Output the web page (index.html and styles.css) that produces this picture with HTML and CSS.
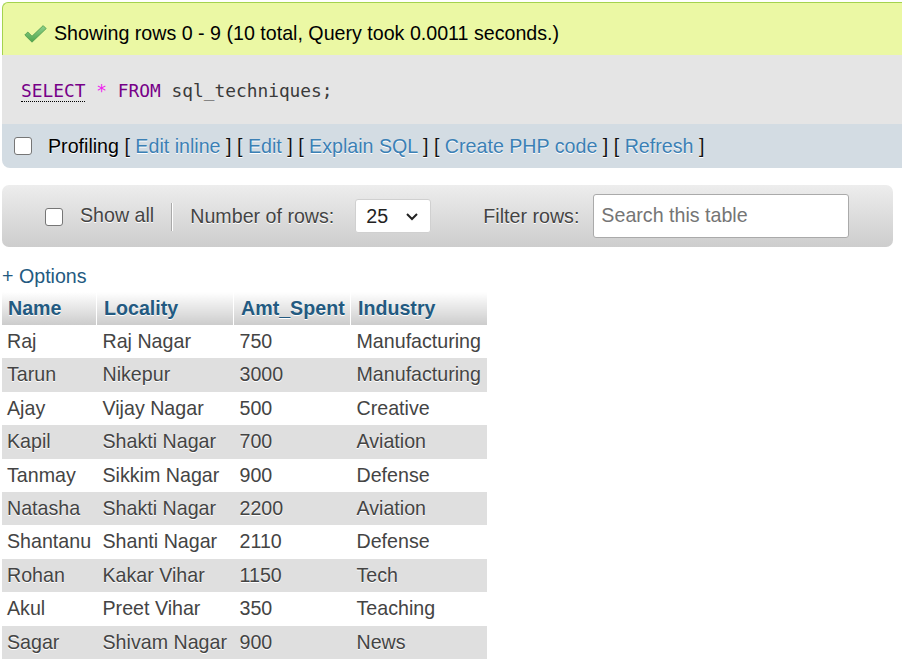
FILE: index.html
```html
<!DOCTYPE html>
<html>
<head>
<meta charset="utf-8">
<title>sql_techniques</title>
<link rel="stylesheet" href="styles.css">
</head>
<body>
<div class="page">
  <div class="success">
    <svg class="check" width="23" height="18" viewBox="0 0 23 18">
      <defs>
        <linearGradient id="g" x1="0" y1="0" x2="0" y2="1">
          <stop offset="0" stop-color="#8fd28c"/>
          <stop offset="1" stop-color="#4fa54d"/>
        </linearGradient>
      </defs>
      <path d="M0.8 10 L3.8 7 L8 11.2 L19.2 0.6 L22.2 3.6 L8 17.2 Z" fill="url(#g)" stroke="#4c9a4a" stroke-width="0.8" stroke-linejoin="round"/>
    </svg>
    <span>Showing rows 0 - 9 (10 total, Query took 0.0011 seconds.)</span>
  </div>
  <div class="sql">
    <code><span class="kw doc">SELECT</span> <span class="op">*</span> <span class="kw">FROM</span> <span class="ident">sql_techniques;</span></code>
  </div>
  <div class="tools">
    <span class="cb"></span>
    <span class="tools-text">Profiling <span class="br">[</span> <a class="tlink">Edit inline</a> <span class="br">]</span> <span class="br">[</span> <a class="tlink">Edit</a> <span class="br">]</span> <span class="br">[</span> <a class="tlink">Explain SQL</a> <span class="br">]</span> <span class="br">[</span> <a class="tlink">Create PHP code</a> <span class="br">]</span> <span class="br">[</span> <a class="tlink">Refresh</a> <span class="br">]</span></span>
  </div>
  <div class="navbar">
    <span class="cb cb-nav"></span>
    <span class="nav-label show-all">Show all</span>
    <span class="sep"></span>
    <span class="nav-label rows-label">Number of rows:</span>
    <div class="select">
      <span>25</span>
      <svg width="14" height="9" viewBox="0 0 14 9"><path d="M2 2 L7 7 L12 2" fill="none" stroke="#222" stroke-width="2"/></svg>
    </div>
    <span class="nav-label filter-label">Filter rows:</span>
    <div class="search">Search this table</div>
  </div>
  <a class="options">+ Options</a>
  <table class="data">
    <thead>
      <tr><th class="c1">Name</th><th class="c2">Locality</th><th class="c3">Amt_Spent</th><th class="c4">Industry</th></tr>
    </thead>
    <tbody>
      <tr><td>Raj</td><td>Raj Nagar</td><td>750</td><td>Manufacturing</td></tr>
      <tr><td>Tarun</td><td>Nikepur</td><td>3000</td><td>Manufacturing</td></tr>
      <tr><td>Ajay</td><td>Vijay Nagar</td><td>500</td><td>Creative</td></tr>
      <tr><td>Kapil</td><td>Shakti Nagar</td><td>700</td><td>Aviation</td></tr>
      <tr><td>Tanmay</td><td>Sikkim Nagar</td><td>900</td><td>Defense</td></tr>
      <tr><td>Natasha</td><td>Shakti Nagar</td><td>2200</td><td>Aviation</td></tr>
      <tr><td>Shantanu</td><td>Shanti Nagar</td><td>2110</td><td>Defense</td></tr>
      <tr><td>Rohan</td><td>Kakar Vihar</td><td>1150</td><td>Tech</td></tr>
      <tr><td>Akul</td><td>Preet Vihar</td><td>350</td><td>Teaching</td></tr>
      <tr><td>Sagar</td><td>Shivam Nagar</td><td>900</td><td>News</td></tr>
    </tbody>
  </table>
</div>
</body>
</html>
```
FILE: styles.css
```css
html, body {
  margin: 0;
  padding: 0;
  overflow: hidden;
  background: #fff;
}
body {
  font-family: "Liberation Sans", Arial, sans-serif;
  font-size: 19.65px;
  color: #444;
}
.page {
  padding: 2px 0 0 2px;
}
.success {
  height: 53px;
  box-sizing: border-box;
  border-top: 1px solid #a4d34f;
  border-left: 1px solid #a4d34f;
  border-top-left-radius: 6px;
  background: #ebf8a4;
  color: #000;
  display: flex;
  align-items: center;
  padding-left: 21px;
  padding-top: 8px;
}
.check {
  margin-right: 7px;
  margin-top: 2px;
}
.sql {
  height: 69px;
  background: #e5e5e5;
  display: flex;
  align-items: center;
  padding-left: 19px;
  box-sizing: border-box;
}
.sql code {
  font-family: "DejaVu Sans Mono", "Liberation Mono", monospace;
  font-size: 17.85px;
  color: #3a3a3a;
  margin-top: 2px;
}
.kw { color: #770088; }
.doc { border-bottom: 1px dotted #000; }
.op { color: #ee22ee; }
.tools {
  height: 44px;
  background: #d3dce3;
  border-bottom-left-radius: 8px;
  display: flex;
  align-items: center;
  padding-left: 12px;
  box-sizing: border-box;
}
.cb {
  display: inline-block;
  width: 16px;
  height: 16px;
  border: 1.5px solid #767676;
  border-radius: 3px;
  background: #fff;
  flex: none;
}
.tools-text {
  margin-left: 16px;
  color: #000;
  text-shadow: 0 1px 0 #fff;
}
.tlink { color: #3b80b5; }
.br { color: #111; }
.navbar {
  margin-top: 17px;
  width: 891px;
  height: 62px;
  box-sizing: border-box;
  border-radius: 7px;
  background: linear-gradient(#ededed, #cdcdcd);
  display: flex;
  align-items: center;
  padding-left: 43px;
}
.cb-nav {
  width: 16px;
  height: 16px;
  margin-top: 1px;
}
.nav-label {
  color: #444;
  text-shadow: 0 1px 0 #fff;
}
.show-all { margin-left: 17px; margin-top: -2px; }
.sep {
  width: 1px;
  height: 28px;
  background: #a9a9a9;
  border-right: 1px solid #fff;
  margin-left: 17px;
  margin-top: 1px;
}
.rows-label { margin-left: 17px; }
.select {
  margin-left: 21px;
  width: 76px;
  height: 34px;
  box-sizing: border-box;
  border: 1px solid #d0d0d0;
  border-radius: 3px;
  background: #fff;
  display: flex;
  align-items: center;
  justify-content: space-between;
  padding: 0 11px 0 10px;
  color: #222;
}
.filter-label { margin-left: 52px; }
.search {
  margin-left: 14px;
  width: 256px;
  height: 44px;
  box-sizing: border-box;
  border: 1px solid #aaa;
  border-radius: 3px;
  background: #fff;
  color: #757575;
  display: flex;
  align-items: center;
  padding-left: 7px;
  padding-bottom: 2px;
}
.options {
  display: block;
  color: #235a81;
  margin-top: 18px;
  line-height: 23px;
}
.data {
  border-collapse: collapse;
  margin-top: 4px;
  text-shadow: 0 1px 0 #fff;
}
.data th {
  background: linear-gradient(#fff, #ccc);
  color: #235a81;
  font-weight: bold;
  text-align: left;
  padding: 5px 3px 5px 7px;
  line-height: 23px;
  border-right: 1px solid #fff;
}
.data th.c4 { border-right: 0; }
.data td {
  padding: 5px 3px 5px 6px;
  line-height: 23.4px;
  white-space: nowrap;
}
.data tbody tr:nth-child(odd) { background: #fff; }
.data tbody tr:nth-child(even) { background: #dfdfdf; }
.data td:first-child { padding-left: 5px; }
.data th.c1 { padding-left: 6px; }
.c1 { width: 85px; }
.c2 { width: 126px; }
.c3 { width: 106px; }
.c4 { width: 126px; }
```
